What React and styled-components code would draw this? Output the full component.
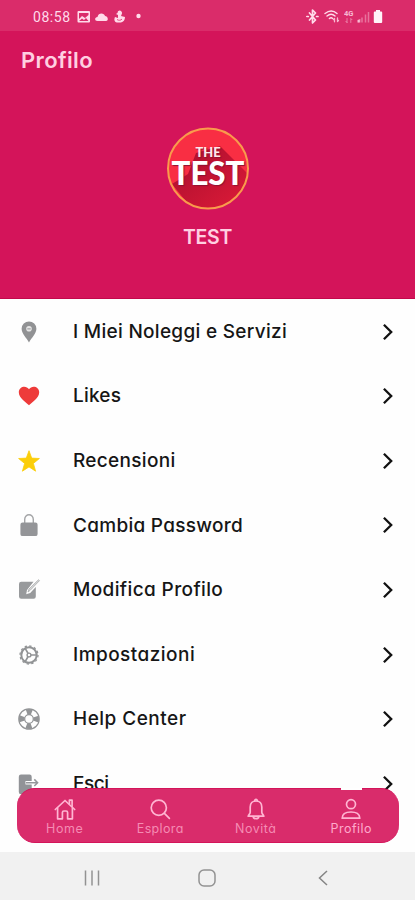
import React from 'react';
import styled, { createGlobalStyle } from 'styled-components';

const GlobalStyle = createGlobalStyle`
  * { box-sizing: border-box; }
  html, body { margin: 0; padding: 0; overflow: hidden; }
  body { font-family: Inter, "Noto Sans", sans-serif; font-feature-settings: "cv11", "ss03"; }
`;

const Screen = styled.div`
  width: 415px;
  height: 900px;
  display: flex;
  flex-direction: column;
  position: relative;
  overflow: hidden;
  background: #fefefe;
`;

const StatusBar = styled.div`
  height: 31px;
  flex: none;
  display: flex;
  align-items: center;
  padding: 2px 31px 0 33px;
  background: #da2c6a;
  color: #ffdbea;
  svg { display: block; flex: none; }
`;

const Clock = styled.span`
  width: 38px;
  margin-right: 6px;
  font: 400 14px/18px Roboto, sans-serif;
  letter-spacing: 0.55px;
  white-space: nowrap;
`;

const StatusIcons = styled.svg`
  margin-left: ${({ $end }) => ($end ? 'auto' : '0')};
`;

const Header = styled.header`
  height: 268px;
  flex: none;
  display: flex;
  flex-direction: column;
  align-items: center;
  background: #d4145a;
  color: #ffcfe1;
  border-bottom: 1px solid #c2084b;
`;

const Title = styled.h1`
  align-self: flex-start;
  margin: 14px 0 0 21px;
  font-size: 22px;
  line-height: 30px;
  font-weight: 600;
  letter-spacing: 0.35px;
`;

const Avatar = styled.svg`
  display: block;
  width: 84px;
  height: 84px;
  margin-top: 51px;
  font-family: Lato, sans-serif;
  font-weight: 900;
`;

const BadgeWord = styled.text`
  text-shadow: 1px 1px 1px #8e1230;
`;

const UserName = styled.div`
  margin-top: 13px;
  font-size: 19.5px;
  line-height: 28px;
  font-weight: 600;
  letter-spacing: -0.25px;
`;

const Menu = styled.main`
  flex: 1;
  min-height: 0;
  overflow: hidden;
`;

const MenuRow = styled.div`
  height: 64.6px;
  display: grid;
  grid-template-columns: 24px 1fr 24px;
  align-items: center;
  padding: 0.5px 15px 0 17px;
  svg { display: block; }
`;

const RowLabel = styled.span`
  padding: 0.5px 0 0 32px;
  color: #161616;
  font-size: 19px;
  line-height: 26px;
  font-weight: 500;
  letter-spacing: ${({ $track }) => $track}px;
  white-space: nowrap;
`;

const TabBar = styled.nav`
  position: absolute;
  left: 17px;
  top: 787.5px;
  width: 382px;
  height: 55.5px;
  display: grid;
  grid-template-columns: repeat(4, 1fr);
  border-radius: 18px;
  background: #d92c6b;
  border: solid #d4145a;
  border-width: 1px 0;
`;

const Tab = styled.div`
  position: relative;
  display: flex;
  flex-direction: column;
  align-items: center;
  padding-top: 8.5px;
  font-size: 12.5px;
  line-height: 16px;
  letter-spacing: ${({ $track }) => $track}px;
  color: ${({ $active }) => ($active ? '#ffa9cb' : '#f58bb3')};
  svg { display: block; width: 24px; height: 24px; color: #ffb5d2; }
`;

const ActiveMark = styled.i`
  position: absolute;
  top: -1px;
  left: 37px;
  width: 21px;
  height: 2px;
  background: #fff;
`;

const SystemBar = styled.footer`
  height: 48px;
  flex: none;
  display: grid;
  grid-template-columns: 115px 115px 117px;
  padding: 3px 0 0 34.5px;
  align-items: center;
  justify-items: center;
  background: #f1f1f1;
  svg { display: block; }
`;

const stroke = { fill: 'none', stroke: 'currentColor', strokeLinecap: 'round', strokeLinejoin: 'round' };

const Chevron = () => (
  <svg width="24" height="24" viewBox="0 0 24 24" fill="none" stroke="#111" strokeWidth="2.3">
    <path d="M7.900 4.800 15.200 12l-7.300 7.200" />
  </svg>
);

const menuIcons = {
  pin: (
    <>
      <path d="M12 1.400a7.400 7.400 0 0 0-7.400 7.400c0 5 5 9.200 7.400 13.700 2.400-4.500 7.400-8.700 7.400-13.700A7.400 7.400 0 0 0 12 1.400z" fill="#919294" />
      <circle cx="12" cy="8.800" r="2.800" fill="#e6e6e6" />
      <path d="M10.300 8.900h3.400" stroke="#919294" />
    </>
  ),
  heart: <path d="M12 21.200C9.500 18.800 1.800 14 1.800 8.200c0-5.800 7.500-7.400 10.200-2.900 2.700-4.500 10.200-2.900 10.200 2.900 0 5.800-7.700 10.600-10.200 13z" fill="#ee3b3a" />,
  star: <path d="m12 1.700 2.700 7.400 7.700.4-6 4.900 2.200 7.800-6.600-4.300-6.600 4.300 2.200-7.800-6-4.900 7.700-.4z" fill="#fbce0a" stroke="#fbce0a" strokeWidth=".8" strokeLinejoin="round" />,
  lock: (
    <>
      <path d="M7.700 11V6.600c0-6.500 8.600-6.500 8.600 0V11" fill="none" stroke="#a4a5a7" strokeWidth="1.400" />
      <rect x="3.400" y="9.500" width="17.200" height="13.600" rx="2.200" fill="#949598" />
    </>
  ),
  edit: (
    <>
      <path d="M4.200 3.700h12.300L10 12l-.8 4.200 4-1.200 5.600-6v9.600a2.200 2.200 0 0 1-2.200 2.200H4.200A2.200 2.200 0 0 1 2 18.600V5.900a2.200 2.200 0 0 1 2.200-2.200z" fill="#989a9c" />
      <path d="m11 14 1-3 9.500-9.200 1 .8-9.300 9.700z" fill="#d9dadb" stroke="#a7a9aa" strokeWidth=".8" />
    </>
  ),
  gear: (
    <g fill="none" stroke="#919395">
      <circle cx="12" cy="12" r="7.700" strokeWidth="2" />
      <circle cx="12" cy="12" r="9" strokeWidth="1.300" strokeDasharray="2.300 2.412" />
      <circle cx="12" cy="12" r="1.900" strokeWidth="1.400" />
      <path d="M14 12h6M11 10.200 8 5.100M11 13.800l-3 5.100" strokeWidth="1.700" />
    </g>
  ),
  help: (
    <g fill="none" stroke="#929496">
      <circle cx="12" cy="12" r="10.200" strokeWidth="1.200" />
      <circle cx="12" cy="12" r="7.200" strokeWidth="5.600" strokeDasharray="5.200 6.110" strokeDashoffset="2.600" />
      <circle cx="12" cy="12" r="4.300" strokeWidth="1.200" />
    </g>
  ),
  exit: (
    <>
      <path d="M4 2.500h8.500a2.200 2.200 0 0 1 2.200 2.200v4.200H8.500v3.600h6.200v7.500a2.200 2.200 0 0 1-2.200 2.200H4A2.200 2.200 0 0 1 1.800 20V4.700A2.200 2.200 0 0 1 4 2.500z" fill="#919397" />
      <path d="M9 10.700h11.500M17.300 7.400l3.300 3.300-3.300 3.300" fill="none" stroke="#94969a" strokeWidth="1.500" />
    </>
  ),
};

const rows = [
  ['pin', 'I Miei Noleggi e Servizi', 0.29],
  ['heart', 'Likes', 0.2],
  ['star', 'Recensioni', 0.3],
  ['lock', 'Cambia Password', 0.28],
  ['edit', 'Modifica Profilo', 0.38],
  ['gear', 'Impostazioni', 0.46],
  ['help', 'Help Center', 0.48],
  ['exit', 'Esci', -0.5],
];

const tabs = [
  ['Home', 0.65, (
    <>
      <path d="m2.300 12.500 9.700-9 9.700 9" />
      <path d="M4.600 11v10.800h4.800v-6.300c0-1 .6-1.500 1.500-1.500h2.200c.9 0 1.500.5 1.500 1.500v6.300h4.800V11" />
      <path d="M16.400 6.800V3.200h2.700v6" />
    </>
  )],
  ['Esplora', 0.35, (
    <>
      <circle cx="10.800" cy="10.800" r="7.600" />
      <path d="m16.400 16.400 5 5" />
    </>
  )],
  ['Novità', 0.5, (
    <>
      <path d="M4.200 19.200c0-1.400 2-2 2-4V10c0-3.500 2.200-6 5.800-6s5.800 2.500 5.800 6v5.200c0 2 2 2.600 2 4z" />
      <path d="M10.800 4c-.4-2.300 2.800-2.300 2.400 0M9.200 19.700c.6 2.600 5 2.600 5.600 0" />
    </>
  )],
  ['Profilo', 0.5, (
    <>
      <circle cx="12" cy="7.200" r="4.500" />
      <path d="M3.200 21.200c0-4.200 3.700-6.200 8.800-6.200s8.800 2 8.800 6.200z" />
    </>
  )],
];

const StatusLeft = () => (
  <StatusIcons width="66" height="16" viewBox="0 0 66 16" fill="currentColor">
    <path fillRule="evenodd" d="M1.500 2h10.500q1 0 1 1v9.500q0 1-1 1H1.500q-1 0-1-1V3q0-1 1-1zM2 4v6l3-3 3 2 3.500-3V4zM2 12h9.500L9 9l-2 2-2-1.500z" />
    <path d="M20.500 12c-3.200 0-3-4 0-4 .8-5 7-4 7.500-1 3 0 4 5 1 5z" />
    <path d="M42.500 1.500a2.500 2.500 0 0 1 2.500 3l-1 2.500 4 1c0 3-1.500 5-4 5.500h-4C37 13 37 10 38 8l3 1V6l-2-1 1.500-1a2.500 2.500 0 0 1 2-2.500z" />
    <path d="M40 10.500c1.500 1.200 4 1 5-.5" fill="none" stroke="#da2c6a" strokeWidth=".8" />
    <circle cx="61.500" cy="7" r="2.200" />
  </StatusIcons>
);

const StatusRight = () => (
  <StatusIcons $end width="78" height="16" viewBox="0 0 78 16">
    <g {...stroke}>
      <path d="m3.500 4 6 7L6.500 14V1l3 3-6 7M.8 7.500h1.500M10.500 7.500H12" strokeWidth="1.700" />
      <path d="M19 4.500c4-3.200 8.500-3.200 12 0M21 7c2.600-2.200 5.600-2.200 8 0M23.400 9.500c1.200-1 2.200-1 3.200 0" strokeWidth="1.400" />
      <path d="M28.500 12.800V9.500l-1 1M31.500 9v3.500l1-1" strokeWidth="1.300" opacity=".8" />
      <path d="M41 9.500v4M39.800 12.300l1.200 1.200M44.800 13.500v-4l1.200 1.200" strokeWidth="1" opacity=".45" />
    </g>
    <text x="38" y="7.300" fontSize="7.500" fontWeight="700" fontFamily="Roboto" fill="currentColor" opacity=".8">4G</text>
    <path d="M52.500 11v2.500M56 8.500v5M59.500 5.500v8M62.500 3v10.500" stroke="currentColor" strokeWidth="1.500" opacity=".4" />
    <path d="M51.500 11v2.500h2.800V10z" fill="currentColor" opacity=".7" />
    <path d="M70 1h4v1.500h1.200q1 0 1 1V13q0 1-1 1h-6.400q-1 0-1-1V3.500q0-1 1-1H70z" fill="#fff4f9" />
  </StatusIcons>
);

const TestBadge = () => (
  <Avatar viewBox="0 0 84 84">
    <defs>
      <clipPath id="disc"><circle cx="42" cy="42.500" r="40" /></clipPath>
      <linearGradient id="shade" x1="0" y1="0" x2="1" y2="1">
        <stop offset="0" stopColor="#a70e2d" />
        <stop offset="1" stopColor="#e01b39" />
      </linearGradient>
    </defs>
    <circle cx="42" cy="42.500" r="40" fill="#f92e43" />
    <g clipPath="url(#disc)">
      <path d="M30 27 54 20 84 50v34H27L6 58l16-10z" fill="url(#shade)" />
    </g>
    <circle cx="42" cy="42.500" r="40" fill="none" stroke="#f99b4c" strokeWidth="2" />
    <g textAnchor="middle">
      <BadgeWord x="42" y="30.500" fontSize="13" textLength="25" lengthAdjust="spacingAndGlyphs" fill="#ffe8ea">THE</BadgeWord>
      <BadgeWord x="42" y="58.500" fontSize="31.500" textLength="73" lengthAdjust="spacingAndGlyphs" fill="#fff">TEST</BadgeWord>
    </g>
  </Avatar>
);

export default function App() {
  return (
    <Screen>
      <GlobalStyle />
      <StatusBar>
        <Clock>08:58</Clock>
        <StatusLeft />
        <StatusRight />
      </StatusBar>
      <Header>
        <Title>Profilo</Title>
        <TestBadge />
        <UserName>TEST</UserName>
      </Header>
      <Menu>
        {rows.map(([icon, label, track]) => (
          <MenuRow key={label}>
            <svg width="24" height="24" viewBox="0 0 24 24">{menuIcons[icon]}</svg>
            <RowLabel $track={track}>{label}</RowLabel>
            <Chevron />
          </MenuRow>
        ))}
      </Menu>
      <TabBar>
        {tabs.map(([label, track, drawing]) => (
          <Tab key={label} $track={track} $active={label === 'Profilo'}>
            {label === 'Profilo' && <ActiveMark />}
            <svg viewBox="0 0 24 24" {...stroke} strokeWidth="1.700">{drawing}</svg>
            {label}
          </Tab>
        ))}
      </TabBar>
      <SystemBar>
        <svg width="18" height="18" viewBox="0 0 18 18" stroke="#929292" strokeWidth="1.500">
          <path d="M2.500 1.500v15M9 1.500v15M15.500 1.500v15" />
        </svg>
        <svg width="20" height="20" viewBox="0 0 20 20" fill="none" stroke="#929292" strokeWidth="1.500">
          <rect x="2" y="2" width="16" height="16" rx="5" />
        </svg>
        <svg width="12" height="18" viewBox="0 0 12 18" fill="none" stroke="#858585" strokeWidth="1.500">
          <path d="M10 2 2.500 9l7.500 7" />
        </svg>
      </SystemBar>
    </Screen>
  );
}
